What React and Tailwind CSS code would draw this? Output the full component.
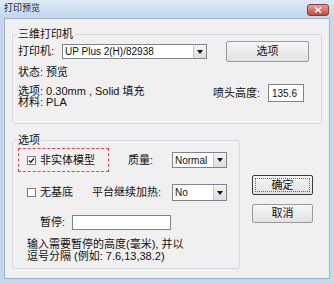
const Arrow = () => (
  <div className="w-[13px] flex items-center justify-center bg-gradient-to-b from-[#f4f4f4] to-[#dedede] border-l border-[#c6c6c6]">
    <svg width="6" height="4" viewBox="0 0 6 4">
      <path d="M0 0h6L3 4z" fill="#111" />
    </svg>
  </div>
);

const Combo = ({ text, className }) => (
  <div className={`flex items-stretch border border-[#7f848c] bg-white ${className}`}>
    <div className="flex-1 flex items-center pl-[2px] text-[10px] text-[#111] overflow-hidden whitespace-nowrap">{text}</div>
    <Arrow />
  </div>
);

const Check = ({ checked }) => (
  <div className="w-[9px] h-[9px] border border-[#7a7a7a] bg-white flex items-center justify-center shrink-0">
    {checked && (
      <svg width="7" height="7" viewBox="0 0 7 7">
        <path d="M1 3.5l1.8 1.8L6 1.5" stroke="#222" strokeWidth="1.4" fill="none" />
      </svg>
    )}
  </div>
);

const Group = ({ title, className, children }) => (
  <div className={`relative border border-[#d3d9de] rounded-[3px] ${className}`}>
    <span className="absolute left-[4px] -top-[7px] bg-[#f0f0f0] px-[1px] leading-[12px] text-[11px] text-[#111]">{title}</span>
    {children}
  </div>
);

const Btn = ({ children, className, primary }) => (
  <div
    className={`flex items-center justify-center rounded-[2px] bg-gradient-to-b from-[#f6f6f6] to-[#e2e2e2] text-[11px] text-[#111] ${
      primary ? 'border border-[#3a3a3a] p-[2px]' : 'border border-[#9a9a9a]'
    } ${className}`}
  >
    {primary ? (
      <div className="w-full h-full border border-dotted border-[#666] flex items-center justify-center">{children}</div>
    ) : (
      children
    )}
  </div>
);

export default function App() {
  return (
    <div className='w-[334px] h-[284px] flex flex-col bg-[#c4d7ed] font-["Liberation_Sans","Noto_Sans_CJK_SC",sans-serif] text-[11px] text-[#111]'>
      {/* title bar */}
      <div className="h-[18px] flex items-center pl-[4px] pr-[5px] bg-gradient-to-b from-[#dde9f6] to-[#c3d6ec]">
        <span className="text-[9px] text-[#1b1b1b]">打印预览</span>
        <div className="ml-auto mt-[1px] w-[22px] h-[12px] rounded-[3px] border border-[#8b3a34] bg-gradient-to-b from-[#e3a29a] to-[#c4463d] flex items-center justify-center">
          <svg width="8" height="6" viewBox="0 0 8 6">
            <path d="M1 0.5l6 5M7 0.5l-6 5" stroke="#fff" strokeWidth="1.6" />
          </svg>
        </div>
      </div>

      {/* body */}
      <div className="flex-1 ml-[4px] mr-[4px] mb-[5px] bg-[#f0f0f0] border border-[#9eb2c9] flex flex-col">
        <Group title="三维打印机" className="ml-[7px] mt-[15px] w-[310px] h-[90px]">
          <div className="pt-[6px] pl-[5px] flex items-center h-[27px]">
            <span className="w-[44px] text-[11px]">打印机:</span>
            <Combo text="UP Plus 2(H)/82938" className="w-[145px] h-[15px]" />
            <Btn className="ml-[19px] w-[83px] h-[21px]">选项</Btn>
          </div>
          <div className="pl-[5px] mt-[4px] h-[13px] leading-[13px]">状态: 预览</div>
          <div className="pl-[5px] mt-[5px] flex">
            <div className="w-[195px] pt-[2px] leading-[11px]">
              <div>选项: 0.30mm , Solid 填充</div>
              <div>材料: PLA</div>
            </div>
            <div className="flex items-center h-[18px]">
              <span className="w-[55px]">喷头高度:</span>
              <div className="w-[36px] h-[18px] border border-[#7f848c] bg-white flex items-center pl-[3px] text-[10px]">135.6</div>
            </div>
          </div>
        </Group>

        <div className="ml-[7px] mt-[16px] flex">
          <Group title="选项" className="w-[228px] h-[129px]">
            <div className="mt-[7px] pl-[5px] flex items-center h-[24px]">
              <div className="w-[91px] h-[24px] border border-dashed border-[#e04848] flex items-center pl-[8px]">
                <Check checked />
                <span className="ml-[4px]">非实体模型</span>
              </div>
              <span className="ml-[19px] w-[44px]">质量:</span>
              <Combo text="Normal" className="w-[55px] h-[16px]" />
            </div>
            <div className="mt-[12px] pl-[14px] flex items-center h-[17px]">
              <Check />
              <span className="ml-[4px] w-[52px]">无基底</span>
              <span className="w-[80px]">平台继续加热:</span>
              <Combo text="No" className="w-[55px] h-[17px]" />
            </div>
            <div className="mt-[14px] pl-[27px] flex items-center h-[15px]">
              <span className="w-[32px]">暂停:</span>
              <div className="w-[99px] h-[15px] border border-[#7f848c] bg-white" />
            </div>
            <div className="mt-[8px] pl-[14px] leading-[12px]">
              <div>输入需要暂停的高度(毫米), 并以</div>
              <div>逗号分隔 (例如: 7.6,13,38.2)</div>
            </div>
          </Group>
          <div className="ml-[12px] mt-[35px] flex flex-col">
            <Btn primary className="w-[61px] h-[20px]">确定</Btn>
            <Btn className="mt-[9px] w-[61px] h-[19px]">取消</Btn>
          </div>
        </div>
      </div>
    </div>
  );
}
